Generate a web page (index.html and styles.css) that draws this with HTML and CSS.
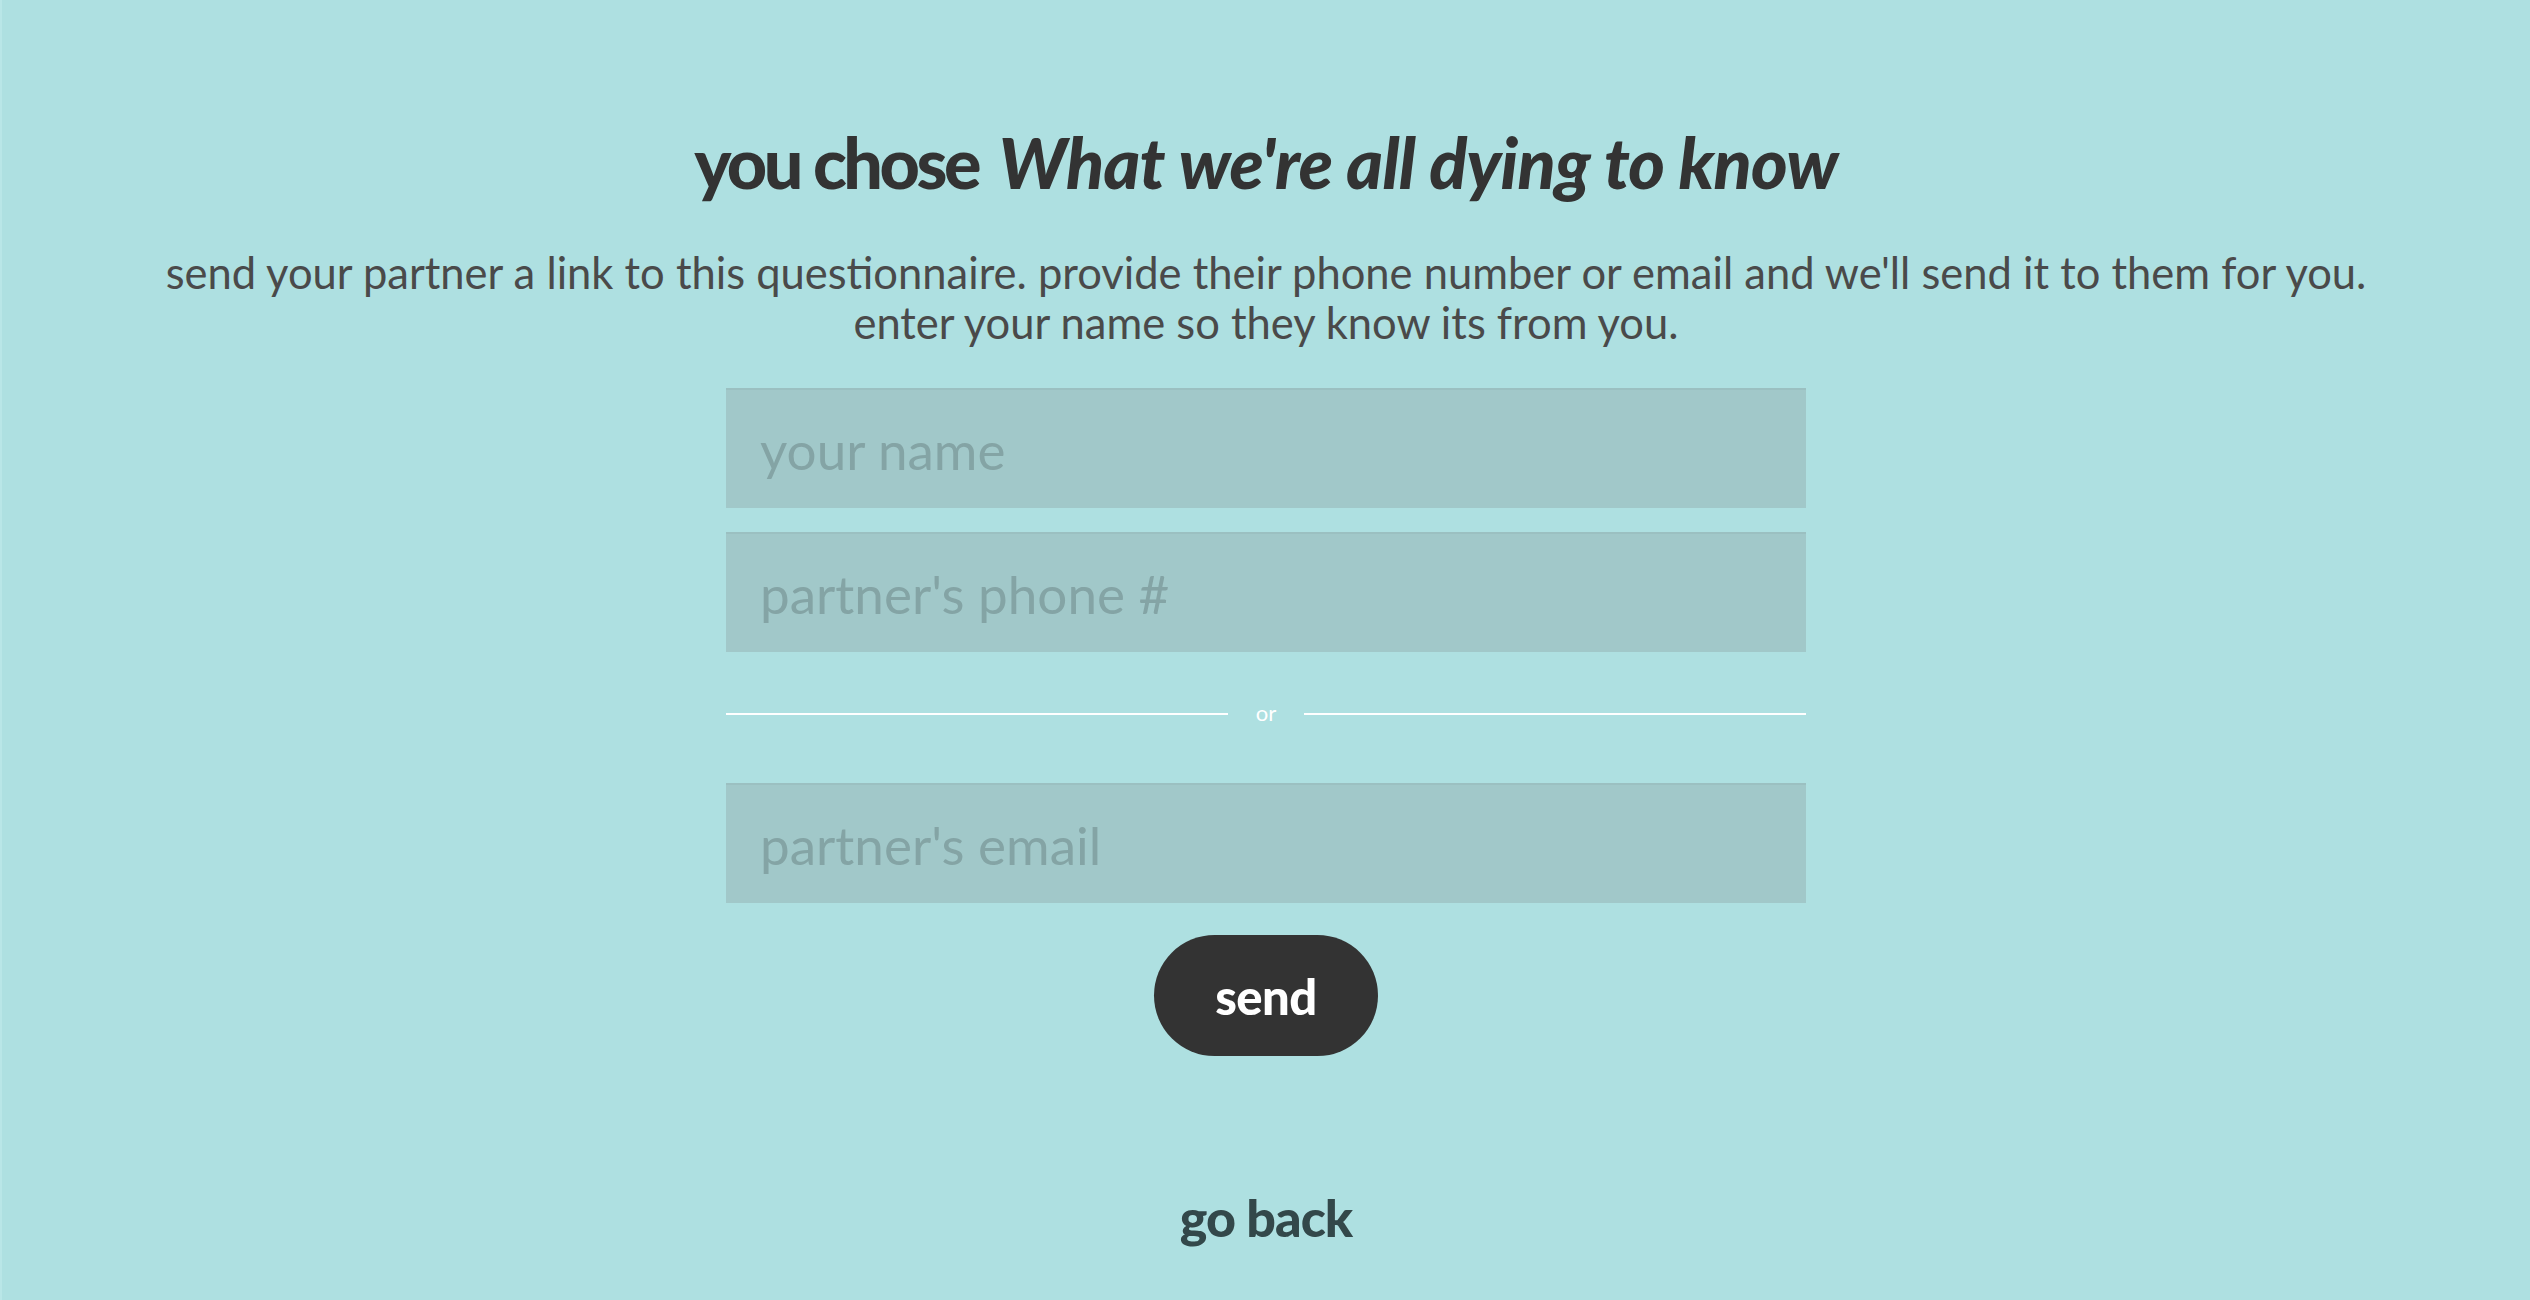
FILE: index.html
```html
<!DOCTYPE html>
<html lang="en">
<head>
<meta charset="utf-8">
<title>send to partner</title>
<link rel="stylesheet" href="styles.css">
</head>
<body>
<main class="page">
  <h1 class="title"><span class="lead">you chose</span> <em class="choice">What we're all dying to know</em></h1>
  <p class="intro">send your partner a link to this questionnaire. provide their phone number or email and we'll send it to them for you.<br>enter your name so they know its from you.</p>
  <form class="form">
    <input class="field" type="text" placeholder="your name">
    <input class="field" type="tel" placeholder="partner's phone #">
    <div class="divider"><span class="rule"></span><span class="or">or</span><span class="rule"></span></div>
    <input class="field" type="email" placeholder="partner's email">
    <button class="send" type="button">send</button>
  </form>
  <a class="back" href="#">go back</a>
</main>
</body>
</html>
```

FILE: styles.css
```css
html, body {
  margin: 0;
  padding: 0;
  height: 100%;
}
body {
  background: #aee0e1;
  border-left: 2px solid #b9e6e7;
  box-sizing: border-box;
}
.page {
  display: flex;
  flex-direction: column;
  align-items: center;
  padding-top: 120px;
  font-family: Lato, "Open Sans", sans-serif;
}
.title {
  margin: 0;
  font-size: 70px;
  line-height: 85px;
  font-weight: 900;
  color: #333333;
}
.title .lead {
  margin-right: 4px;
  letter-spacing: -3.5px;
}
.title .choice {
  font-style: italic;
  letter-spacing: -0.75px;
}
.intro {
  margin: 42px 0 0;
  font-size: 43.5px;
  line-height: 50px;
  font-weight: 400;
  color: #4a4a4a;
  text-align: center;
}
.form {
  display: flex;
  flex-direction: column;
  align-items: center;
  width: 1080px;
  margin-top: 41px;
}
.field {
  box-sizing: border-box;
  width: 100%;
  height: 120px;
  margin: 0 0 24px;
  padding: 0 34px;
  border: 0;
  border-top: 2px solid #9bc0c1;
  background: #a1c8c9;
  font-family: Lato, "Open Sans", sans-serif;
  font-size: 53px;
  color: #333;
  outline: none;
}
.field::placeholder {
  color: #84a4a5;
}
.divider {
  display: flex;
  align-items: center;
  width: 100%;
  height: 60px;
  margin: 8px 0 39px;
}
.rule {
  flex: 1;
  height: 2px;
  background: #ffffff;
}
.or {
  padding: 0 28px;
  font-size: 22px;
  color: #ffffff;
  line-height: 1;
  padding-bottom: 3px;
}
.send {
  width: 224px;
  height: 121px;
  margin-top: 8px;
  border: 0;
  border-radius: 61px;
  background: #333333;
  color: #ffffff;
  font-family: Lato, "Open Sans", sans-serif;
  font-size: 49px;
  font-weight: 900;
  letter-spacing: -0.5px;
  cursor: pointer;
}
.back {
  margin-top: 130px;
  font-size: 52px;
  font-weight: 900;
  color: #33484a;
  text-decoration: none;
  letter-spacing: -1px;
}
```
